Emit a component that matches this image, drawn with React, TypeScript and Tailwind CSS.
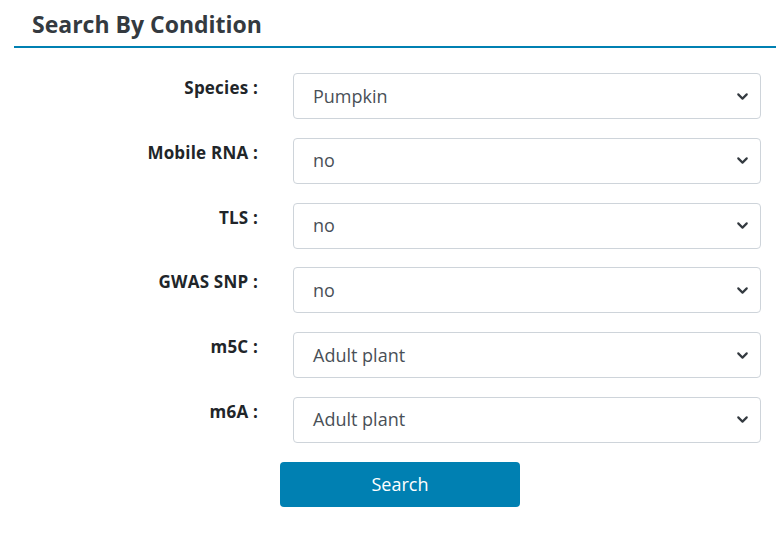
import { ChevronDown } from 'lucide-react'

const fields = [
  { label: 'Species :', value: 'Pumpkin' },
  { label: 'Mobile RNA :', value: 'no' },
  { label: 'TLS :', value: 'no' },
  { label: 'GWAS SNP :', value: 'no' },
  { label: 'm5C :', value: 'Adult plant' },
  { label: 'm6A :', value: 'Adult plant' },
]

export default function App() {
  return (
    <div className="w-[776px] h-[536px] bg-white overflow-hidden" style={{ fontFamily: '"Open Sans", "Noto Sans", sans-serif' }}>
      {/* Header */}
      <div className="ml-[14px] border-b-2 border-[#0080b2] pt-[9px] pb-[7px]">
        <h2 className="pl-[18px] text-[23px] leading-[30px] font-bold text-[#343a40]">Search By Condition</h2>
      </div>

      {/* Form */}
      <div className="mt-[25px] flex flex-col gap-[18.8px]">
        {fields.map(f => (
          <div key={f.label} className="flex items-start">
            <label className="w-[258px] text-right pt-[2px] text-[17px] leading-[26px] font-bold text-[#212529] tracking-[0.2px]">
              {f.label}
            </label>
            <div className="ml-[35px] w-[468px] h-[46px] flex items-center justify-between border border-[#ced4da] rounded-[4px] pl-[19px] pr-[9px]">
              <span className="text-[18px] text-[#495057]">{f.value}</span>
              <ChevronDown size={17} strokeWidth={3} className="text-[#343a40]" />
            </div>
          </div>
        ))}
      </div>

      <div className="mt-[19px] ml-[280px]">
        <button className="w-[240px] h-[45px] rounded-[4px] bg-[#0080b2] text-white text-[18px]">Search</button>
      </div>
    </div>
  )
}
